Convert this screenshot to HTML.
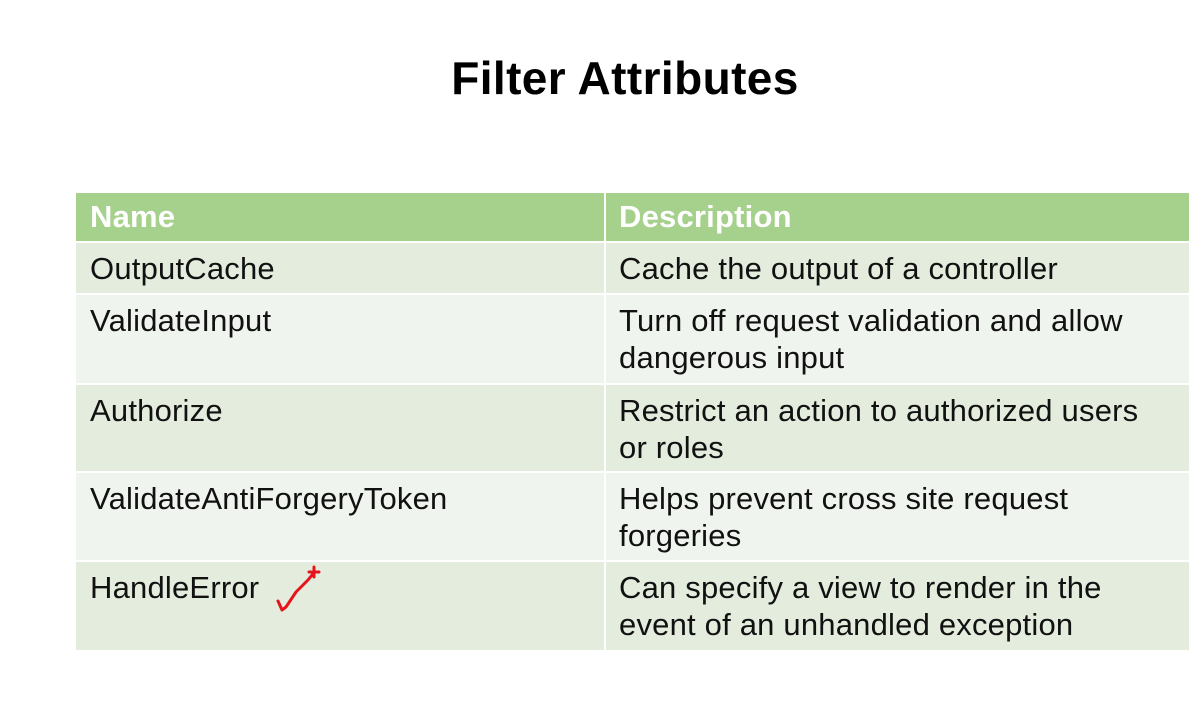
<!DOCTYPE html>
<html><head><style>
body{margin:0;width:1203px;height:725px;background:#fff;position:relative;overflow:hidden;font-family:"Liberation Sans",Arial,sans-serif}
h1{position:absolute;left:0;width:1250px;top:53px;margin:0;text-align:center;font-size:46px;font-weight:bold;color:#000;line-height:50px;letter-spacing:0.4px}
.r{position:absolute;left:76px;width:1113px}
.c{position:absolute;top:0;bottom:0;font-size:31px;line-height:37px;color:#111;padding-top:7px;box-sizing:border-box;letter-spacing:0.2px;white-space:nowrap}
.a{left:0;width:528px;padding-left:14px}
.b{left:530px;right:0;padding-left:13px}
.h .c{background:#a6d18d;color:#fff;font-weight:bold;padding-top:5px}
.o .c{background:#e3ecdd}
.e .c{background:#f0f4ee}
</style></head><body>
<h1>Filter Attributes</h1>
<div class="r h" style="top:193px;height:48px"><div class="c a">Name</div><div class="c b">Description</div></div>
<div class="r o" style="top:243px;height:50px"><div class="c a">OutputCache</div><div class="c b">Cache the output of a controller</div></div>
<div class="r e" style="top:295px;height:88px"><div class="c a">ValidateInput</div><div class="c b">Turn off request validation and allow<br>dangerous input</div></div>
<div class="r o" style="top:385px;height:86px"><div class="c a">Authorize</div><div class="c b">Restrict an action to authorized users<br>or roles</div></div>
<div class="r e" style="top:473px;height:87px"><div class="c a">ValidateAntiForgeryToken</div><div class="c b">Helps prevent cross site request<br>forgeries</div></div>
<div class="r o" style="top:562px;height:88px"><div class="c a">HandleError</div><div class="c b">Can specify a view to render in the<br>event of an unhandled exception</div></div>
<svg style="position:absolute;left:0;top:0" width="1203" height="725"><path d="M278 601 L282 610 L286 607 L296 592 L308 580 L312 575 M309 572 L319 572 M314 567 L314 577" stroke="#e8141c" stroke-width="3" fill="none" stroke-linecap="round" stroke-linejoin="round"/></svg>
</body></html>
